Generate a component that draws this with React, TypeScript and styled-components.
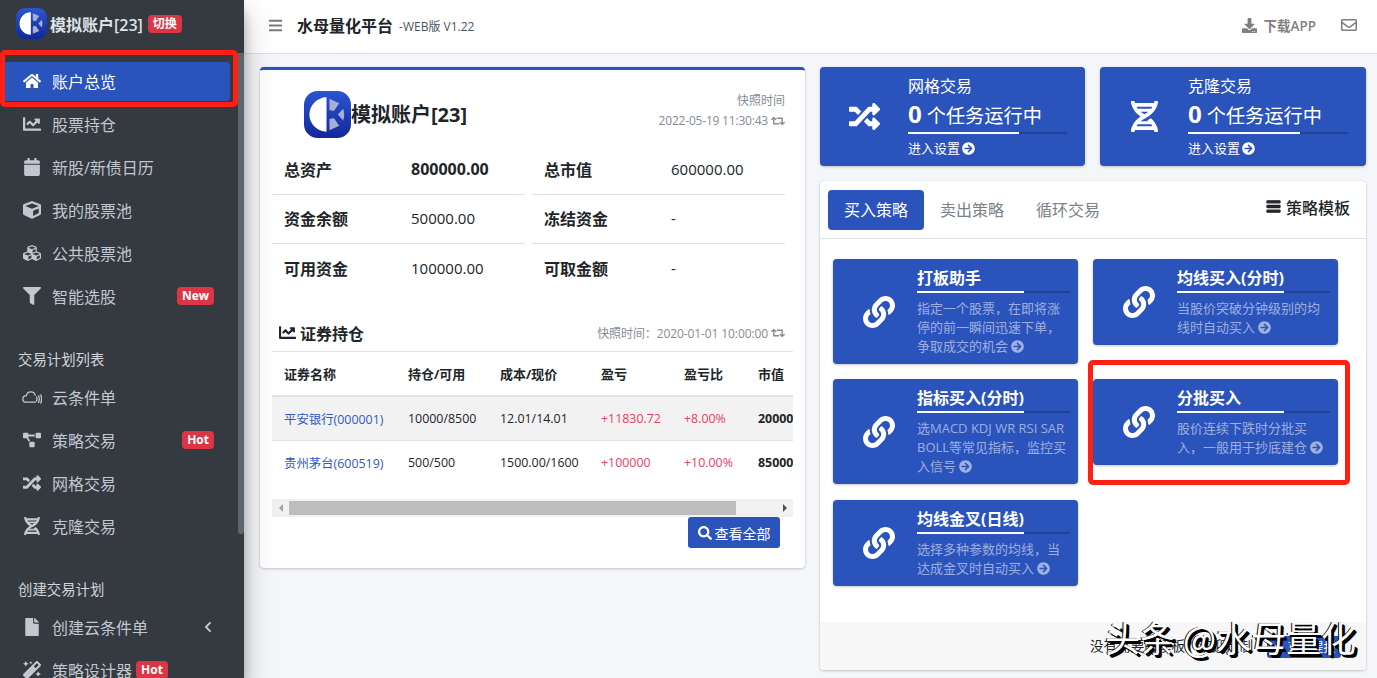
import { Fragment, ReactNode } from 'react';
import styled, { createGlobalStyle } from 'styled-components';
import {
    FaArrowCircleRight,
    FaBars,
    FaCalendar,
    FaChartLine,
    FaChevronLeft,
    FaCube,
    FaCubes,
    FaDna,
    FaDownload,
    FaFile,
    FaFilter,
    FaHome,
    FaLink,
    FaMagic,
    FaPaperPlane,
    FaProjectDiagram,
    FaRandom,
    FaRegEnvelope,
    FaRetweet,
    FaSearch,
} from 'react-icons/fa';

const BLUE = '#2b53bc';
const FONT = '"Open Sans", "Noto Sans CJK SC", sans-serif';

const GlobalStyle = createGlobalStyle`
    html, body {
        margin: 0;
        height: 100%;
        overflow: hidden;
    }
    body {
        font-family: ${FONT};
        color: #212529;
        background: #f4f6f9;
    }
    * {
        box-sizing: border-box;
    }
`;

const Layout = styled.div`
    display: flex;
    height: 678px;
    width: 1377px;
    overflow: hidden;
    position: relative;
`;

/* sidebar */

const Sidebar = styled.aside`
    position: relative;
    z-index: 2;
    flex: 0 0 244px;
    background: #343a40;
    box-shadow: 0 14px 28px rgba(0, 0, 0, 0.25), 0 10px 10px rgba(0, 0, 0, 0.22);
    overflow: hidden;
`;

const SideThumb = styled.div`
    position: absolute;
    left: 238px;
    top: 53px;
    width: 6px;
    height: 481px;
    background: #5f656c;
    border-radius: 0 0 3px 3px;
`;

const Brand = styled.div`
    display: flex;
    align-items: center;
    height: 53px;
    padding: 0 0 6px 16px;
    color: #dfe3e8;
    font-size: 16px;
    font-weight: 600;
    white-space: nowrap;
`;

const BrandName = styled.span`
    margin-left: 3px;
`;

const SwitchBadge = styled.span`
    margin-left: 5px;
    padding: 0 5px;
    height: 18px;
    line-height: 18px;
    font-size: 12px;
    font-weight: 700;
    color: #fff;
    background: #dc3545;
    border-radius: 4px;
`;

const Nav = styled.nav`
    padding: 9px 8px 0 8px;
    width: 238px;
`;

const NavItem = styled.a<{ $active?: boolean }>`
    display: flex;
    align-items: center;
    height: 39px;
    margin-bottom: 4.1px;
    margin-left: ${(p) => (p.$active ? '-8px' : '0')};
    padding-left: ${(p) => (p.$active ? '52px' : '44px')};
    padding-bottom: 2px;
    position: relative;
    color: ${(p) => (p.$active ? '#fff' : '#c2c7d0')};
    background: ${(p) => (p.$active ? BLUE : 'transparent')};
    border-radius: 0 4px 4px 0;
    font-size: 16px;
    white-space: nowrap;
`;

const NavIcon = styled.span<{ $active?: boolean }>`
    position: absolute;
    left: ${(p) => (p.$active ? '22px' : '14px')};
    width: 20px;
    display: flex;
    justify-content: center;
    font-size: 18px;
`;

const NavTail = styled.span`
    position: absolute;
    right: 16px;
    display: flex;
    align-items: center;
    font-size: 12px;
`;

const SideBadge = styled.span`
    background: #dc3545;
    color: #fff;
    font-size: 12px;
    font-weight: 700;
    height: 18px;
    line-height: 18px;
    padding: 0 5px;
    border-radius: 4px;
`;

const InlineBadge = styled(SideBadge)`
    margin-left: 4px;
`;

const NavHeader = styled.div<{ $top: number }>`
    height: 34px;
    line-height: 34px;
    margin-top: ${(p) => p.$top}px;
    margin-bottom: 1.5px;
    padding-left: 10px;
    font-size: 14.4px;
    color: #d0d4db;
`;

/* main */

const Main = styled.div`
    flex: 1;
    display: flex;
    flex-direction: column;
    min-width: 0;
`;

const Header = styled.header`
    display: flex;
    align-items: center;
    height: 54px;
    padding: 0 20px 3px 24px;
    background: #fff;
    border-bottom: 1px solid #dee2e6;
`;

const Burger = styled.span`
    color: #7a7a7a;
    font-size: 15px;
    display: flex;
    margin-right: 14px;
`;

const AppTitle = styled.span`
    font-size: 16px;
    font-weight: 700;
`;

const AppVersion = styled.span`
    margin-left: 6px;
    font-size: 12px;
    color: #4b5563;
    position: relative;
    top: 1px;
`;

const HeaderRight = styled.div`
    margin-left: auto;
    display: flex;
    align-items: center;
    color: #7f7f7f;
    font-size: 14px;
    font-weight: 600;
`;

const DownloadLink = styled.span`
    display: flex;
    align-items: center;
    gap: 6px;
    margin-right: 25px;
    font-size: 13.5px;
`;

const Content = styled.main`
    flex: 1;
    display: flex;
    align-items: flex-start;
    gap: 15px;
    padding: 13px 11px 0 16px;
`;

const LeftCol = styled.div`
    flex: 0 0 545px;
    min-width: 0;
`;

const RightCol = styled.div`
    flex: 1;
    min-width: 0;
`;

const AccountCard = styled.section`
    height: 501px;
    background: #fff;
    border-top: 3px solid ${BLUE};
    border-radius: 4px;
    box-shadow: 0 0 1px rgba(0, 0, 0, 0.13), 0 1px 3px rgba(0, 0, 0, 0.2);
    padding: 0 12px;
    overflow: hidden;
`;

const AccountHead = styled.div`
    display: flex;
    align-items: flex-start;
    height: 76px;
    padding: 21px 8px 0 32px;
`;

const AccountName = styled.h2`
    margin: 12px 0 0 0;
    font-size: 20px;
    line-height: 24px;
    font-weight: 700;
    white-space: nowrap;
`;

const Snapshot = styled.div`
    margin-left: auto;
    text-align: right;
    font-size: 12px;
    line-height: 20px;
    color: #858c94;
    white-space: nowrap;
`;

const SnapshotRow = styled.div`
    display: flex;
    align-items: center;
    justify-content: flex-end;
    gap: 3px;
    letter-spacing: -0.2px;
`;

const SummaryGrid = styled.div`
    display: grid;
    grid-template-columns: 253px 253px;
    column-gap: 7px;
`;

const SummaryRow = styled.div<{ $last?: boolean }>`
    display: flex;
    align-items: center;
    height: 49px;
    padding: 0 0 2px 12px;
    border-bottom: ${(p) => (p.$last ? 'none' : '1px solid #dee2e6')};
`;

const SummaryLabel = styled.span`
    flex: 0 0 127px;
    font-size: 16px;
    font-weight: 700;
`;

const SummaryValue = styled.span<{ $bold?: boolean }>`
    font-size: ${(p) => (p.$bold ? '16px' : '15px')};
    font-weight: ${(p) => (p.$bold ? 700 : 400)};
`;

const HoldingsHead = styled.div`
    display: flex;
    align-items: center;
    height: 36px;
    margin-top: 23px;
    padding: 0 0 2px 7px;
    border-bottom: 1px solid #dee2e6;
`;

const HoldingsTitle = styled.h3`
    display: flex;
    align-items: center;
    gap: 4px;
    margin: 0;
    font-size: 16px;
    font-weight: 700;
`;

const HoldingsTime = styled(SnapshotRow)`
    margin-left: auto;
    margin-right: 8px;
    font-size: 12px;
    color: #858c94;
    letter-spacing: -0.1px;
`;

const TableWrap = styled.div`
    overflow: hidden;
`;

const Table = styled.table`
    border-collapse: collapse;
    table-layout: fixed;
    width: 580px;
    font-size: 12.4px;
`;

const Th = styled.th<{ $w: number }>`
    width: ${(p) => p.$w}px;
    height: 44px;
    padding: 0 0 0 12px;
    text-align: left;
    font-size: 13px;
    font-weight: 700;
    border-bottom: 2px solid #dee2e6;
    white-space: nowrap;
`;

const Tr = styled.tr<{ $shade?: boolean }>`
    background: ${(p) => (p.$shade ? '#f2f2f2' : '#fff')};
`;

const Td = styled.td<{ $tone?: 'link' | 'up' | 'strong' }>`
    height: 44px;
    padding: 1px 0 0 12px;
    white-space: nowrap;
    border-top: 1px solid #dee2e6;
    color: ${(p) => (p.$tone === 'link' ? '#2f59c4' : p.$tone === 'up' ? '#e6405f' : '#212529')};
    font-weight: ${(p) => (p.$tone === 'strong' ? 700 : 400)};
`;

const HScroll = styled.div`
    display: flex;
    align-items: center;
    height: 18px;
    margin-top: 15px;
    background: #f1f1f1;
`;

const ScrollArrow = styled.span<{ $left?: boolean; $dark?: boolean }>`
    flex: 0 0 17px;
    display: flex;
    justify-content: center;
    &::before {
        content: '';
        border-style: solid;
        border-width: 4px 0 4px 4px;
        border-color: transparent transparent transparent ${(p) => (p.$dark ? '#505050' : '#a3a3a3')};
        transform: ${(p) => (p.$left ? 'rotate(180deg)' : 'none')};
    }
`;

const ScrollTrack = styled.div`
    flex: 1;
    height: 14px;
`;

const ScrollThumb = styled.div`
    width: 447px;
    height: 14px;
    background: #bdbdbd;
`;

const ViewAllRow = styled.div`
    display: flex;
    justify-content: flex-end;
    padding-right: 13px;
`;

const ViewAll = styled.button`
    display: flex;
    align-items: center;
    justify-content: center;
    gap: 3px;
    width: 92px;
    height: 31px;
    padding: 0;
    border: none;
    border-radius: 3px;
    background: ${BLUE};
    color: #fff;
    font-family: ${FONT};
    font-size: 14px;
`;

const InfoRow = styled.div`
    display: grid;
    grid-template-columns: 265px 266px;
    gap: 15px;
`;

const InfoBox = styled.div`
    display: flex;
    height: 99px;
    background: ${BLUE};
    color: #fff;
    border-radius: 4px;
    box-shadow: 0 0 1px rgba(0, 0, 0, 0.13), 0 1px 3px rgba(0, 0, 0, 0.2);
`;

const InfoIcon = styled.div`
    flex: 0 0 88px;
    display: flex;
    align-items: center;
    justify-content: center;
    font-size: 31px;
`;

const InfoBody = styled.div`
    flex: 1;
    padding: 9px 18px 0 0;
`;

const InfoTitle = styled.div`
    font-size: 16px;
    line-height: 20px;
`;

const InfoCount = styled.div`
    margin: 4px 0 2px;
    font-size: 19.2px;
    line-height: 28px;
    white-space: nowrap;
`;

const InfoNumber = styled.b`
    font-size: 24px;
    font-weight: 700;
`;

const Progress = styled.div`
    height: 2px;
    background: rgba(0, 0, 0, 0.2);
`;

const ProgressBar = styled.div`
    height: 100%;
    background: #fff;
`;

const InfoLink = styled.div`
    display: flex;
    align-items: center;
    gap: 2px;
    margin-top: 4px;
    font-size: 13px;
    line-height: 20px;
`;

const StrategyCard = styled.section`
    position: relative;
    height: 489px;
    margin-top: 15px;
    background: #fff;
    border-radius: 4px;
    box-shadow: 0 0 1px rgba(0, 0, 0, 0.13), 0 1px 3px rgba(0, 0, 0, 0.2);
    display: flex;
    flex-direction: column;
`;

const Tabs = styled.div`
    display: flex;
    align-items: center;
    flex: 0 0 58px;
    padding: 0 16px 0 8px;
    border-bottom: 1px solid #dee2e6;
`;

const Tab = styled.span<{ $active?: boolean }>`
    width: 96px;
    height: 40px;
    line-height: 40px;
    text-align: center;
    font-size: 16px;
    border-radius: 4px;
    color: ${(p) => (p.$active ? '#fff' : '#7b8188')};
    background: ${(p) => (p.$active ? BLUE : 'transparent')};
`;

const TemplateLink = styled.span`
    margin-left: auto;
    display: flex;
    align-items: center;
    gap: 5px;
    font-size: 16px;
    font-weight: 500;
    position: relative;
    top: -3px;
`;

const CardGrid = styled.div`
    flex: 1;
    display: grid;
    grid-template-columns: 245px 245px;
    grid-template-rows: 104px 105px 86px;
    column-gap: 15px;
    row-gap: 16px;
    align-content: start;
    align-items: start;
    padding: 20px 0 0 13px;
`;

const StrategyBox = styled.div`
    display: flex;
    background: ${BLUE};
    color: #fff;
    border-radius: 4px;
    box-shadow: 0 0 1px rgba(0, 0, 0, 0.13), 0 1px 3px rgba(0, 0, 0, 0.2);
    padding: 8px 8px 7.5px 0;
`;

const StrategyIcon = styled.div`
    flex: 0 0 84px;
    display: flex;
    align-items: center;
    justify-content: center;
    padding-left: 8px;
    font-size: 32px;
`;

const StrategyBody = styled.div`
    flex: 1;
    min-width: 0;
`;

const StrategyTitle = styled.div`
    font-size: 16px;
    line-height: 22px;
    font-weight: 700;
    margin-bottom: 2px;
    white-space: nowrap;
`;

const StrategyDesc = styled.div`
    margin-top: 6px;
    font-size: 13px;
    line-height: 19px;
    color: rgba(255, 255, 255, 0.55);
`;

const DescArrow = styled(FaArrowCircleRight)`
    margin-left: 3px;
    vertical-align: -1.5px;
`;

const CardFooter = styled.div`
    display: flex;
    align-items: center;
    justify-content: flex-end;
    flex: 0 0 48px;
    gap: 14px;
    padding: 0 25px 3px 0;
    background: #f7f7f7;
    font-size: 13.6px;
    border-radius: 0 0 4px 4px;
`;

const ReportButton = styled.span`
    display: flex;
    align-items: center;
    justify-content: center;
    gap: 4px;
    width: 74px;
    height: 22px;
    background: ${BLUE};
    color: #fff;
    font-size: 12px;
    border-radius: 3px;
    position: relative;
    top: 2px;
`;

/* things lying over the page */

const RedFrame = styled.div`
    position: absolute;
    border: 5px solid #ff2013;
    border-radius: 5px;
    pointer-events: none;
    z-index: 5;
`;

const MenuFrame = styled(RedFrame)`
    left: 0;
    top: 50px;
    width: 238px;
    height: 57px;
`;

const CardFrame = styled(RedFrame)`
    left: 1088px;
    top: 360px;
    width: 262px;
    height: 125px;
`;

const Watermark = styled.div`
    position: absolute;
    right: 21px;
    top: 614px;
    z-index: 6;
    font-family: "Noto Sans CJK SC", sans-serif;
    font-size: 35px;
    line-height: 46px;
    color: #fff;
    text-shadow: 2px 2px 0 #000, 3px 3px 0 #000, -1px 0 0 #000;
    white-space: nowrap;
`;

function Logo({ size }: { size: number }) {
    return (
        <svg width={size} height={size} viewBox="0 0 48 48" style={{ flex: 'none' }}>
            <defs>
                <linearGradient id="logoFill" x1="0" y1="0" x2="0" y2="1">
                    <stop offset="0" stopColor="#2c55d0" />
                    <stop offset="1" stopColor="#12289a" />
                </linearGradient>
            </defs>
            <rect width="48" height="48" rx="14" fill="url(#logoFill)" />
            <path d="M23 6.5 A17.5 17.5 0 0 0 23 41.5 Z" fill="#fff" />
            <path d="M26 8 L36 12.5 L30.5 20.5 L26 19.5 Z" fill="#a5aed4" />
            <path d="M34.5 24 L40 18 Q42 24 40 30 Z" fill="#a5aed4" />
            <path d="M26 40 L36 35.5 L30.5 27.5 L26 28.5 Z" fill="#a5aed4" />
        </svg>
    );
}

function CloudWaves() {
    return (
        <svg width="23" height="16" viewBox="0 0 23 16" fill="none" stroke="currentColor" strokeWidth="1.5">
            <path d="M16 14 H5 C2.5 14 1 12.2 1 10.2 C1 8 2.8 6.4 5 6.4 C5.6 3.6 7.8 2 10.2 2 C12.8 2 14.8 3.8 15.4 6.4" />
            <path d="M16.6 7.5 Q18 10.5 16.6 13.5" />
            <path d="M19 6 Q21 10.5 19 15" />
            <path d="M21.4 5 Q23.6 10.5 21.4 15.6" />
        </svg>
    );
}

function Item(props: { icon: ReactNode; label: string; active?: boolean; tail?: ReactNode; inline?: string }) {
    return (
        <NavItem $active={props.active}>
            <NavIcon $active={props.active}>{props.icon}</NavIcon>
            {props.label}
            {props.inline && <InlineBadge>{props.inline}</InlineBadge>}
            {props.tail && <NavTail>{props.tail}</NavTail>}
        </NavItem>
    );
}

function Info(props: { icon: ReactNode; title: string }) {
    return (
        <InfoBox>
            <InfoIcon>{props.icon}</InfoIcon>
            <InfoBody>
                <InfoTitle>{props.title}</InfoTitle>
                <InfoCount>
                    <InfoNumber>0</InfoNumber> 个任务运行中
                </InfoCount>
                <Progress>
                    <ProgressBar style={{ width: '70%' }} />
                </Progress>
                <InfoLink>
                    进入设置 <FaArrowCircleRight size={13} />
                </InfoLink>
            </InfoBody>
        </InfoBox>
    );
}

const strategies = [
    { title: '打板助手', desc: '指定一个股票，在即将涨停的前一瞬间迅速下单，争取成交的机会' },
    { title: '均线买入(分时)', desc: '当股价突破分钟级别的均线时自动买入' },
    { title: '指标买入(分时)', desc: '选MACD KDJ WR RSI SAR BOLL等常见指标，监控买入信号' },
    { title: '分批买入', desc: '股价连续下跌时分批买入，一般用于抄底建仓' },
    { title: '均线金叉(日线)', desc: '选择多种参数的均线，当达成金叉时自动买入' },
];

const summary = [
    ['总资产', '800000.00', '总市值', '600000.00'],
    ['资金余额', '50000.00', '冻结资金', '-'],
    ['可用资金', '100000.00', '可取金额', '-'],
];

export default function App() {
    return (
        <Layout>
            <GlobalStyle />
            <Sidebar>
                <Brand>
                    <Logo size={31} />
                    <BrandName>模拟账户[23]</BrandName>
                    <SwitchBadge>切换</SwitchBadge>
                </Brand>
                <Nav>
                    <Item active icon={<FaHome />} label="账户总览" />
                    <Item icon={<FaChartLine />} label="股票持仓" />
                    <Item icon={<FaCalendar />} label="新股/新债日历" />
                    <Item icon={<FaCube />} label="我的股票池" />
                    <Item icon={<FaCubes />} label="公共股票池" />
                    <Item icon={<FaFilter />} label="智能选股" tail={<SideBadge>New</SideBadge>} />
                    <NavHeader $top={26.5}>交易计划列表</NavHeader>
                    <Item icon={<CloudWaves />} label="云条件单" />
                    <Item icon={<FaProjectDiagram />} label="策略交易" tail={<SideBadge>Hot</SideBadge>} />
                    <Item icon={<FaRandom />} label="网格交易" />
                    <Item icon={<FaDna />} label="克隆交易" />
                    <NavHeader $top={26}>创建交易计划</NavHeader>
                    <Item icon={<FaFile />} label="创建云条件单" tail={<FaChevronLeft />} />
                    <Item icon={<FaMagic />} label="策略设计器" inline="Hot" />
                </Nav>
                <SideThumb />
            </Sidebar>
            <Main>
                <Header>
                    <Burger>
                        <FaBars />
                    </Burger>
                    <AppTitle>水母量化平台</AppTitle>
                    <AppVersion>-WEB版 V1.22</AppVersion>
                    <HeaderRight>
                        <DownloadLink>
                            <FaDownload size={15} /> 下载APP
                        </DownloadLink>
                        <FaRegEnvelope size={16} />
                    </HeaderRight>
                </Header>
                <Content>
                    <LeftCol>
                        <AccountCard>
                            <AccountHead>
                                <Logo size={47} />
                                <AccountName>模拟账户[23]</AccountName>
                                <Snapshot>
                                    <div>快照时间</div>
                                    <SnapshotRow>
                                        2022-05-19 11:30:43 <FaRetweet size={14} />
                                    </SnapshotRow>
                                </Snapshot>
                            </AccountHead>
                            <SummaryGrid>
                                {summary.map((row, i) => (
                                    <Fragment key={row[0]}>
                                        <SummaryRow $last={i === 2}>
                                            <SummaryLabel>{row[0]}</SummaryLabel>
                                            <SummaryValue $bold={i === 0}>{row[1]}</SummaryValue>
                                        </SummaryRow>
                                        <SummaryRow $last={i === 2}>
                                            <SummaryLabel>{row[2]}</SummaryLabel>
                                            <SummaryValue>{row[3]}</SummaryValue>
                                        </SummaryRow>
                                    </Fragment>
                                ))}
                            </SummaryGrid>
                            <HoldingsHead>
                                <HoldingsTitle>
                                    <FaChartLine size={17} /> 证券持仓
                                </HoldingsTitle>
                                <HoldingsTime>
                                    快照时间：2020-01-01 10:00:00 <FaRetweet size={14} />
                                </HoldingsTime>
                            </HoldingsHead>
                            <TableWrap>
                                <Table>
                                    <thead>
                                        <tr>
                                            <Th $w={124}>证券名称</Th>
                                            <Th $w={92}>持仓/可用</Th>
                                            <Th $w={101}>成本/现价</Th>
                                            <Th $w={83}>盈亏</Th>
                                            <Th $w={74}>盈亏比</Th>
                                            <Th $w={106}>市值</Th>
                                        </tr>
                                    </thead>
                                    <tbody>
                                        <Tr $shade>
                                            <Td $tone="link">平安银行(000001)</Td>
                                            <Td>10000/8500</Td>
                                            <Td>12.01/14.01</Td>
                                            <Td $tone="up">+11830.72</Td>
                                            <Td $tone="up">+8.00%</Td>
                                            <Td $tone="strong">200000.00</Td>
                                        </Tr>
                                        <Tr>
                                            <Td $tone="link">贵州茅台(600519)</Td>
                                            <Td>500/500</Td>
                                            <Td>1500.00/1600</Td>
                                            <Td $tone="up">+100000</Td>
                                            <Td $tone="up">+10.00%</Td>
                                            <Td $tone="strong">850000.00</Td>
                                        </Tr>
                                    </tbody>
                                </Table>
                            </TableWrap>
                            <HScroll>
                                <ScrollArrow $left />
                                <ScrollTrack>
                                    <ScrollThumb />
                                </ScrollTrack>
                                <ScrollArrow $dark />
                            </HScroll>
                            <ViewAllRow>
                                <ViewAll>
                                    <FaSearch size={14} /> 查看全部
                                </ViewAll>
                            </ViewAllRow>
                        </AccountCard>
                    </LeftCol>
                    <RightCol>
                        <InfoRow>
                            <Info icon={<FaRandom />} title="网格交易" />
                            <Info icon={<FaDna />} title="克隆交易" />
                        </InfoRow>
                        <StrategyCard>
                            <Tabs>
                                <Tab $active>买入策略</Tab>
                                <Tab>卖出策略</Tab>
                                <Tab>循环交易</Tab>
                                <TemplateLink>
                                    <FaBars size={15} stroke="currentColor" strokeWidth={40} /> 策略模板
                                </TemplateLink>
                            </Tabs>
                            <CardGrid>
                                {strategies.map((s) => (
                                    <StrategyBox key={s.title}>
                                        <StrategyIcon>
                                            <FaLink />
                                        </StrategyIcon>
                                        <StrategyBody>
                                            <StrategyTitle>{s.title}</StrategyTitle>
                                            <Progress>
                                                <ProgressBar style={{ width: '70%' }} />
                                            </Progress>
                                            <StrategyDesc>
                                                {s.desc}
                                                <DescArrow size={13} />
                                            </StrategyDesc>
                                        </StrategyBody>
                                    </StrategyBox>
                                ))}
                            </CardGrid>
                            <CardFooter>
                                没有需要的模板？欢迎定制
                                <ReportButton>
                                    <FaPaperPlane size={11} /> 直接提报
                                </ReportButton>
                            </CardFooter>
                        </StrategyCard>
                    </RightCol>
                </Content>
            </Main>
            <MenuFrame />
            <CardFrame />
            <Watermark>头条 @水母量化</Watermark>
        </Layout>
    );
}
